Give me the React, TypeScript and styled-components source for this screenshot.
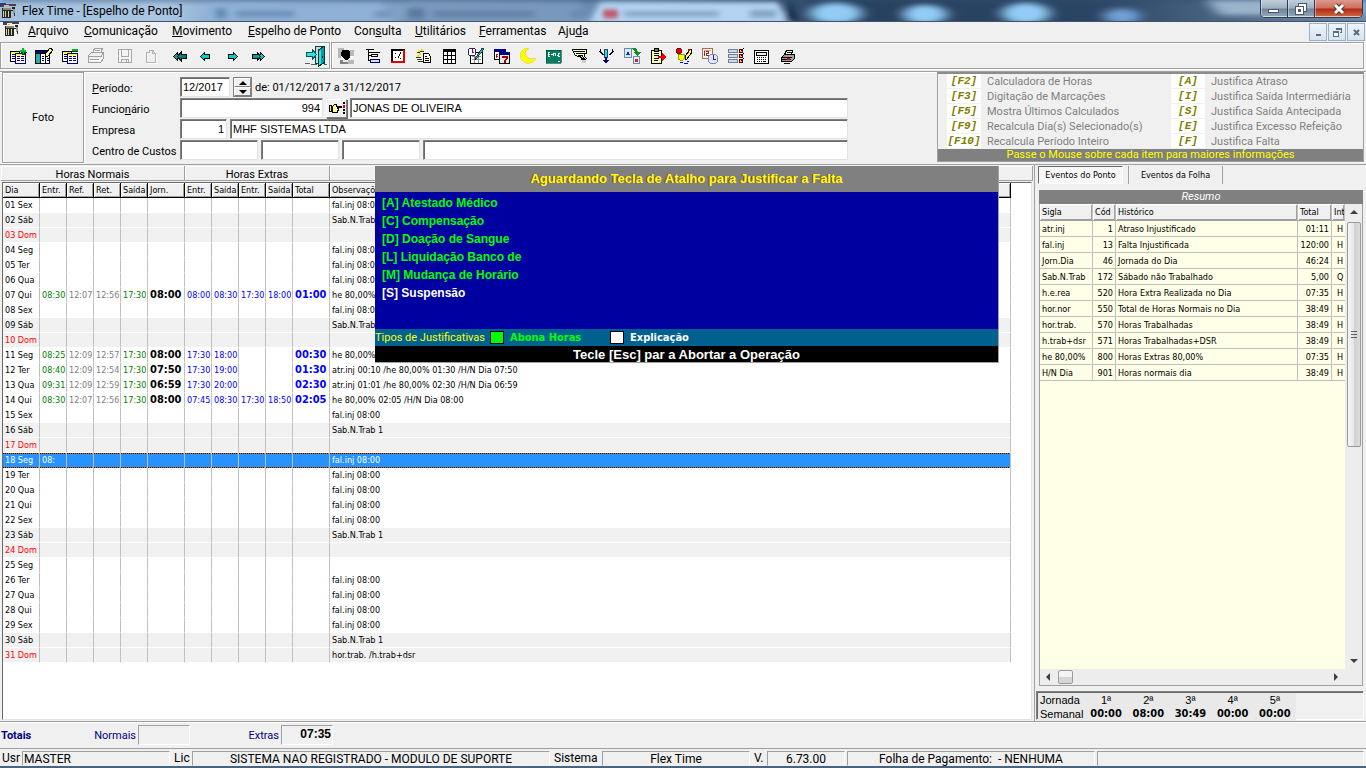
import React from 'react';
import styled, { createGlobalStyle, css } from 'styled-components';

const ui = 'Roboto, "Open Sans", sans-serif';
const small = '"DejaVu Sans Condensed", "DejaVu Sans", Roboto, sans-serif';
const arial = '"Liberation Sans", Arial, sans-serif';

const GlobalStyle = createGlobalStyle`
  * { box-sizing: border-box; }
  html, body { margin: 0; padding: 0; }
  body { background: #f0f0f0; font-family: ${ui}; font-size: 11px; color: #000; }
  button, input { font: inherit; color: inherit; margin: 0; padding: 0; border-radius: 0; }
  u { text-underline-offset: 1px; }
`;

const groove = css`
  border: 1px solid #a0a0a0;
  box-shadow: inset 1px 1px 0 #fff, 1px 1px 0 #fff;
`;
const sunken = css`
  border: 1px solid;
  border-color: #a0a0a0 #fff #fff #a0a0a0;
`;

const Window = styled.div`
  display: flex;
  flex-direction: column;
  min-height: 100vh;
  background: #f0f0f0;
`;

/* ---------- title bar ---------- */
const TitleBar = styled.header`
  position: relative;
  display: flex;
  height: 22px;
  overflow: hidden;
  border-bottom: 1px solid #43536b;
  box-shadow: inset 0 -1px 0 #c9d9ea;
  background: #4c6a8c;
`;
const Glass = styled.svg`
  position: absolute;
  top: 0;
  left: 0;
  width: 100%;
  height: 100%;
`;
const TitleText = styled.h1`
  position: relative;
  flex: 1;
  display: flex;
  align-items: center;
  gap: 5px;
  margin: 0;
  padding-left: 0;
  font-size: 12px;
  font-weight: 400;
  line-height: 20px;
`;
const Caption = styled.div`
  position: relative;
  display: flex;
  height: 18px;
  margin-right: 3px;
  border: 1px solid #2d3b4e;
  border-top: 0;
  border-radius: 0 0 5px 5px;
  overflow: hidden;
`;
const CaptionButton = styled.button<{ $close?: boolean }>`
  display: flex;
  align-items: center;
  justify-content: center;
  width: ${p => (p.$close ? 47 : 27)}px;
  border: 0;
  border-right: ${p => (p.$close ? '0' : '1px solid #2d3b4e')};
  box-shadow: inset 0 -1px 0 rgba(255, 255, 255, 0.6), inset 1px 0 0 rgba(255, 255, 255, 0.4);
  background: ${p =>
    p.$close
      ? 'linear-gradient(#dc9a8d 0, #cf6d5b 8px, #b32a12 9px, #d06a45 17px)'
      : 'linear-gradient(#c3cfdb 0, #9fb0c2 8px, #70859b 9px, #94a8bd 17px)'};
`;

/* ---------- menu ---------- */
const MenuBar = styled.nav`
  display: flex;
  align-items: center;
  height: 20px;
  padding: 0 1px 0 3px;
  font-size: 12px;
`;
const MenuItem = styled.button<{ $w: number }>`
  width: ${p => p.$w}px;
  border: 0;
  background: none;
  text-align: left;
  white-space: nowrap;
  line-height: 18px;
  padding-bottom: 2px;
`;
const ChildButtons = styled.div`
  display: flex;
  gap: 1px;
  margin-left: auto;
`;
const ChildButton = styled.button`
  display: flex;
  align-items: center;
  justify-content: center;
  width: 18px;
  height: 18px;
  border: 1px solid #9fb0c0;
  background: linear-gradient(#eef5fc, #d4e3f2);
`;

/* ---------- toolbar ---------- */
const ToolRow = styled.div`
  display: flex;
  gap: 1px;
  height: 29px;
  padding-right: 2px;
`;
const ToolGroup = styled.div<{ $grow?: boolean }>`
  ${groove}
  display: flex;
  align-items: center;
  height: 27px;
  padding: ${p => (p.$grow ? '0 1px' : '0 0 0 4px')};
  width: ${p => (p.$grow ? 'auto' : '330px')};
  flex: ${p => (p.$grow ? '1' : 'none')};
`;
const ToolButton = styled.button<{ $gap?: number; $end?: boolean }>`
  display: flex;
  align-items: center;
  justify-content: center;
  width: 26px;
  height: 24px;
  border: 0;
  background: none;
  margin-left: ${p => (p.$end ? 'auto' : `${p.$gap || 0}px`)};
`;

/* ---------- form ---------- */
const FormArea = styled.form`
  display: flex;
  height: 94px;
  padding: 0 2px;
  border-top: 1px solid #a0a0a0;
  border-bottom: 1px solid #a0a0a0;
  box-shadow: inset 0 1px 0 #fff;
`;
const Photo = styled.div`
  ${groove}
  width: 82px;
  height: 91px;
  display: flex;
  align-items: center;
  justify-content: center;
`;
const Fields = styled.div`
  flex: 1;
  display: flex;
  flex-direction: column;
  gap: 1px;
  padding: 5px 89px 0 8px;
`;
const FieldRow = styled.div`
  display: flex;
  align-items: center;
  gap: 3px;
  height: 20px;
`;
const FieldLabel = styled.label`
  width: 85px;
  padding-top: 2px;
  white-space: nowrap;
`;
const Field = styled.input<{ $w?: number; $right?: boolean }>`
  height: 20px;
  width: ${p => (p.$w ? `${p.$w}px` : 'auto')};
  flex: ${p => (p.$w ? 'none' : '1')};
  min-width: 0;
  padding: 0 2px;
  font-family: ${arial};
  text-align: ${p => (p.$right ? 'right' : 'left')};
  background: #fff;
  border: 1px solid;
  border-color: #808080 #e3e3e3 #e3e3e3 #808080;
  box-shadow: inset 1px 1px 0 #696969;
  outline: none;
`;
const Spinner = styled.div`
  display: flex;
  flex-direction: column;
  width: 19px;
  height: 20px;
  border: 1px solid #808080;
`;
const raised = css`
  background: #f0f0f0;
  border: 1px solid;
  border-color: #fff #808080 #808080 #fff;
`;
const SpinButton = styled.button`
  ${raised}
  flex: 1;
  display: flex;
  align-items: center;
  justify-content: center;
`;
const PickButton = styled.button`
  ${raised}
  box-shadow: 1px 1px 0 #696969;
  display: flex;
  align-items: center;
  justify-content: center;
  width: 21px;
  height: 19px;
`;
const Legend = styled.aside`
  width: 427px;
  height: 90px;
  border: 1px solid #a0a0a0;
  border-top: 2px solid #8c8c8c;
  display: flex;
  flex-direction: column;
  color: #808080;
`;
const LegendGrid = styled.dl`
  flex: 1;
  margin: 0;
  display: grid;
  grid-template-columns: 34px 178px 34px 1fr;
  grid-auto-rows: 15px;
  column-gap: 6px;
  padding-left: 9px;
  line-height: 15px;
  white-space: nowrap;
`;
const Key = styled.dt`
  height: 14px;
  background: #fff;
  color: #808000;
  font: italic 700 11px/14px "Liberation Mono", monospace;
  text-align: center;
`;
const KeyText = styled.dd`
  margin: 0;
`;
const LegendNote = styled.div`
  height: 13px;
  background: #808080;
  color: #ff0;
  line-height: 12px;
  text-align: center;
`;

/* ---------- main ---------- */
const Main = styled.main`
  flex: 1;
  display: flex;
  border-bottom: 1px solid #a0a0a0;
`;
const Sheet = styled.section`
  position: relative;
  flex: 1;
  min-width: 0;
  display: flex;
  flex-direction: column;
  padding: 1px;
  border-right: 1px solid #a0a0a0;
`;
const GroupBar = styled.div`
  display: flex;
  height: 15px;
  line-height: 17px;
  text-align: center;
  border-bottom: 1px solid #a0a0a0;
`;
const Group = styled.div<{ $w?: number }>`
  width: ${p => (p.$w ? `${p.$w}px` : 'auto')};
  flex: ${p => (p.$w ? 'none' : '1')};
  border-right: 1px solid #a0a0a0;
  box-shadow: inset 1px 1px 0 #fff;
`;
const SheetBody = styled.div`
  flex: 1;
  margin: 1px 1px 0 1px;
  background: #fff;
  border-left: 1px solid #696969;
  border-top: 1px solid #696969;
  border-right: 1px solid #e3e3e3;
  border-bottom: 1px solid #e3e3e3;
`;
const Table = styled.table`
  table-layout: fixed;
  width: calc(100% - 20px);
  border-collapse: separate;
  border-spacing: 0;
  font: 9px/14px ${small};
  white-space: nowrap;
`;
const Th = styled.th`
  height: 15px;
  padding: 0 0 0 2px;
  overflow: hidden;
  font-weight: 400;
  text-align: left;
  background: #f0f0f0;
  border-right: 1px solid #000;
  border-bottom: 1px solid #000;
  box-shadow: inset 1px 1px 0 #fff, inset -1px -1px 0 #a0a0a0;
`;
const rowColor = { work: '#000', sat: '#000', sun: '#f00', sel: '#fff' };
const Td = styled.td<{ $c?: string; $bold?: boolean }>`
  height: 15px;
  padding: 0 0 0 2px;
  overflow: hidden;
  border-right: 1px solid #c0c0c0;
  color: ${p => p.$c || 'inherit'};
  ${p => p.$bold && css`font-size: 11px; font-weight: 700;`}
`;
type Kind = 'work' | 'sat' | 'sun' | 'sel';
const Tr = styled.tr<{ $kind: Kind }>`
  color: ${p => (p.$kind === 'sel' ? '#fff' : '#000')};
  ${Td} {
    background: ${p => (p.$kind === 'sel' ? '#2893ff' : p.$kind === 'work' ? '#fff' : '#f1f1f1')};
    border-bottom: 1px solid #fff;
    ${p => p.$kind === 'sel' && css`
      border-bottom: 0;
      background:
        repeating-linear-gradient(90deg, #000 0 1px, #d76c00 1px 2px) top / 100% 1px no-repeat,
        repeating-linear-gradient(90deg, #000 0 1px, #d76c00 1px 2px) bottom / 100% 1px no-repeat,
        #2893ff;
      line-height: 13px;
    `}
  }
  ${Td}:first-child { color: ${p => rowColor[p.$kind]}; }
`;

/* ---------- shortcut dialog ---------- */
const Dialog = styled.div`
  position: absolute;
  top: 1px;
  left: 375px;
  width: 624px;
  border: 1px solid #a0a0a0;
  border-width: 0 1px 1px 0;
  font-family: ${arial};
  font-size: 12px;
  font-weight: 700;
`;
const DialogTitle = styled.h2`
  margin: 0;
  height: 26px;
  line-height: 26px;
  font-size: 13px;
  text-align: center;
  color: #ff0;
  background: #808080;
  text-shadow: -1px 0 0 #804040;
`;
const Options = styled.ul`
  list-style: none;
  margin: 0;
  height: 137px;
  padding: 2px 7px;
  background: #0000a0;
  color: #0f0;
  line-height: 18px;
  li:last-child { color: #fff; }
`;
const Kinds = styled.div`
  display: flex;
  align-items: center;
  height: 17px;
  background: #006090;
  font: 11px/17px ${ui};
  color: #ff0;
`;
const KindsLabel = styled.span`
  width: 115px;
  white-space: nowrap;
`;
const Swatch = styled.span<{ $c: string }>`
  width: 14px;
  height: 13px;
  border: 1px solid #000;
  background: ${p => p.$c};
`;
const KindName = styled.strong<{ $c: string }>`
  width: 106px;
  padding-left: 6px;
  font: 700 11px/17px ${small};
  color: ${p => p.$c};
`;
const Hint = styled.div`
  height: 16px;
  line-height: 17px;
  font-size: 13px;
  background: #000;
  color: #fff;
  text-align: center;
`;

/* ---------- right column ---------- */
const Side = styled.aside`
  width: 331px;
  display: flex;
  flex-direction: column;
  padding-top: 1px;
`;
const Tabs = styled.div`
  display: flex;
  height: 24px;
  padding-left: 3px;
  font: 9px/16px ${small};
`;
const Tab = styled.button<{ $on?: boolean }>`
  height: 18px;
  width: ${p => (p.$on ? 85 : 95)}px;
  margin-right: 5px;
  white-space: nowrap;
  border: 1px solid #a0a0a0;
  border-width: ${p => (p.$on ? '1px' : '0 1px')};
  border-color: ${p => (p.$on ? '#696969 #fff #fff #696969' : '#a0a0a0')};
  background: ${p => (p.$on ? '#f8f8f8' : 'none')};
`;
const Summary = styled.div`
  flex: 1;
  display: flex;
  flex-direction: column;
  margin: 0 3px 5px 4px;
  border: 1px solid #a0a0a0;
`;
const SummaryTitle = styled.h2`
  margin: -1px -1px 0;
  height: 14px;
  font: italic 400 11px/14px ${ui};
  color: #fff;
  text-align: center;
  background: #808080;
`;
const SummaryBody = styled.div`
  flex: 1;
  display: flex;
`;
const SummaryGrid = styled.div`
  flex: 1;
  min-width: 0;
  overflow: hidden;
  background: #ffffe8;
`;
const SumTable = styled(Table)`
  width: 100%;
`;
const SumTh = styled(Th)`
  height: 17px;
  border-color: #c0c0c0;
  border-bottom-color: #a0a0a0;
`;
const SumTd = styled.td<{ $right?: boolean }>`
  height: 16px;
  padding: 0 2px;
  overflow: hidden;
  text-align: ${p => (p.$right ? 'right' : 'left')};
  border-right: 1px solid #c0c0c0;
  border-bottom: 1px solid #c0c0c0;
  &:last-child { padding: 0 0 0 5px; border-right: 0; }
`;
const VScroll = styled.div`
  width: 17px;
  display: flex;
  flex-direction: column;
  align-items: center;
  background: #ededed;
`;
const ArrowButton = styled.button`
  width: 16px;
  height: 16px;
  display: flex;
  align-items: center;
  justify-content: center;
  border: 0;
  background: none;
`;
const VThumb = styled.div`
  width: 14px;
  height: 225px;
  margin: 2px 0 auto;
  display: flex;
  align-items: center;
  justify-content: center;
  border: 1px solid #9a9a9a;
  border-radius: 2px;
  background: linear-gradient(90deg, #f6f6f6, #e6e6e6 50%, #d2d2d2 51%, #dcdcdc);
`;
const HScroll = styled.div`
  display: flex;
  align-items: center;
  height: 16px;
  padding-right: 18px;
  background: #ededed;
`;
const HThumb = styled.div`
  width: 15px;
  height: 14px;
  margin: 0 auto 0 2px;
  border: 1px solid #9a9a9a;
  border-radius: 2px;
  background: linear-gradient(#f4f4f4 50%, #d6d6d6 51%);
`;
const Weekly = styled.div`
  height: 29px;
  margin: 0 2px 1px 1px;
  border: 1px solid;
  border-color: #808080 #fff #fff #808080;
  box-shadow: inset 1px 1px 0 #696969;
`;
const WeeklyTable = styled.table`
  width: 258px;
  table-layout: fixed;
  border-collapse: collapse;
  background: #e9e9e9;
  margin: 1px 0 0 1px;
  th { padding: 0; font: 11px/14px ${arial}; text-align: center; height: 13px; }
  td { padding: 0; font: 700 11px/14px ${small}; text-align: center; height: 13px; }
  th:first-child { text-align: left; padding-left: 2px; }
`;

/* ---------- footer ---------- */
const Totals = styled.div`
  display: flex;
  align-items: center;
  height: 27px;
  padding-left: 1px;
  color: #000080;
  border-bottom: 1px solid #a0a0a0;
  box-shadow: inset 0 1px 0 #fff;
  label { width: 91px; text-align: right; padding-right: 2px; }
`;
const TotalsTitle = styled.strong`
  width: 46px;
`;
const TotalBox = styled.input`
  ${sunken}
  width: 52px;
  height: 20px;
  padding: 0 1px 3px;
  background: #f0f0f0;
  color: #000;
  font: 700 12px ${arial};
  text-align: right;
`;
const StatusBar = styled.footer`
  display: flex;
  height: 19px;
  padding-top: 2px;
  font-size: 12px;
  line-height: 15px;
  white-space: nowrap;
  border-bottom: 2px solid #4a6480;
`;
const StatusLabel = styled.span<{ $w: number }>`
  width: ${p => p.$w}px;
  padding-left: 2px;
`;
const StatusBox = styled.span<{ $w?: number; $left?: boolean }>`
  border: 1px solid;
  border-color: #a0a0a0 #fff #f0f0f0 #a0a0a0;
  width: ${p => (p.$w ? `${p.$w}px` : 'auto')};
  flex: ${p => (p.$w ? 'none' : '1')};
  margin-right: 2px;
  padding: 0 1px;
  text-align: ${p => (p.$left ? 'left' : 'center')};
`;

/* ---------- icons: small pixel drawings ---------- */
const Ico = ({ w = 18, h = 18, children }: { w?: number; h?: number; children: React.ReactNode }) => (
  <svg width={w} height={h} viewBox={`0 0 ${w} ${h}`} shapeRendering="crispEdges" aria-hidden="true">
    {children}
  </svg>
);
const L = ({ d, c = '#000', w = 1 }: { d: string; c?: string; w?: number }) => (
  <path d={d} stroke={c} strokeWidth={w} fill="none" />
);

const AppIcon = () => (
  <Ico w={17} h={17}>
    <path d="M0 1h6v2H0z" fill="#223a9a" /><path d="M6 2h4v1H6z" fill="#d02020" />
    <path d="M0 3h4v2H0zM9 2h7v2H9z" fill="#444" />
    <path d="M2 6h9v10H2z" fill="#26261a" /><path d="M3 9h1v6H3zM5 9h1v6H5zM8 9h1v6H8z" fill="#d8d4b8" />
    <path d="M3 6h8v2H3z" fill="#8a8a70" /><path d="M12 5h3v2h-3zM11 8h4v1h-4z" fill="#222" /><path d="M13 7h2v5h-2z" fill="#999" />
    <path d="M5 4h2v1H5z" fill="#e0c030" /><path d="M14 11h1v3h-1z" fill="#333" />
  </Ico>
);
const pages = (
  <>
    <path d="M1.500 4.500h9v10h-9z" fill="#fff" stroke="#000" />
    <path d="M2 5h8v1H2z" fill="#ff0" />
    <L d="M3 7.500h3M3 9.500h3M3 11.500h3" c="#000080" />
    <path d="M6.500 6.500h10v10h-10z" fill="#fff" stroke="#000080" />
    <path d="M7 7h9v1H7z" fill="#ff0" />
    <L d="M8 9.500h3M12 9.500h3M8 11.500h3M12 11.500h3M8 13.500h3M12 13.500h3" c="#000080" />
  </>
);
const icons: Record<string, React.ReactNode> = {
  Novo: <Ico>{pages}<path d="M11 3h2V1h2v2h2v2h-2v2h-2V5h-2z" fill="#00c020" /><L d="M12 5.500h1v2h2v-2h3" c="#004000" /></Ico>,
  Alterar: (
    <Ico>
      <path d="M.5 3.500h14v13H.5z" fill="#fff" stroke="#000" /><path d="M1 4h10v2H1z" fill="#000080" />
      <path d="M1 7h4v9H1z" fill="#20b0b0" /><L d="M5.500 6v10M10.500 6v10M1 6.500h13" />
      <L d="M7 9.500h2M7 11.500h2M7 13.500h2M12 11.500h2M12 13.500h2" c="#000080" />
      <path d="M15 1l3 2-5 6h-3V7z" fill="#ff8" stroke="#000" />
    </Ico>
  ),
  Excluir: <Ico>{pages}<path d="M11 2h6v2h-6z" fill="#00b020" /><L d="M11 4.500h6" c="#004000" /></Ico>,
  Imprimir: (
    <Ico>
      <path d="M5.500 6l2-4.500h8l-2 4.500" fill="#f8f8f8" stroke="#a0a0a0" />
      <path d="M1.500 8.500l3-3h12v6l-3 4h-12z" fill="#f0f0f0" stroke="#a0a0a0" />
      <L d="M2 9.500h12M14 9.500l2-3M3 12.500h9M8 3.500h5" c="#a0a0a0" /><L d="M2 13.500h12" c="#fff" />
    </Ico>
  ),
  Salvar: (
    <Ico>
      <path d="M2.500 2.500h13v13h-13z" fill="#f4f4f4" stroke="#a8a8a8" />
      <L d="M5.500 3v6h7V3M5.500 16v-4h7v4M10.500 12v3" c="#a8a8a8" />
    </Ico>
  ),
  Cancelar: (
    <Ico>
      <path d="M4.500 5.500h3v-3M4.500 5v10.500h9V6.500h-3v-3h-3M10.500 3l3 3.500" fill="none" stroke="#b4b4b4" />
      <L d="M5 16.500h9.500V7" c="#fff" />
    </Ico>
  ),
  Primeiro: (
    <Ico>
      <path d="M6 9.500l4-4v2h5v4h-5v2z" fill="#008080" stroke="#000" />
      <path d="M2.500 9.500l4-4v2h2l-2 2 2 2h-2v2z" fill="#00a0a0" stroke="#000" />
    </Ico>
  ),
  Anterior: <Ico><path d="M3.500 9.500l4-4v2h5v4h-5v2z" fill="#00d0d0" stroke="#000" /></Ico>,
  Próximo: <Ico><path d="M14.500 9.500l-4-4v2h-5v4h5v2z" fill="#00d0d0" stroke="#000" /></Ico>,
  Último: (
    <Ico>
      <path d="M12 9.500l-4-4v2H3v4h5v2z" fill="#00a0a0" stroke="#000" />
      <path d="M15.500 9.500l-4-4v2h-2l2 2-2 2h2v2z" fill="#00c8c8" stroke="#000" />
    </Ico>
  ),
  Sair: (
    <Ico w={22} h={22}>
      <path d="M10.500 1.500h9v17h-9z" fill="#cfd8d8" stroke="#004848" />
      <path d="M13.500 5l5.500-3.500v16l-5.500 4z" fill="#00a0a8" stroke="#003838" />
      <path d="M14 6l2-1v14l-2 1z" fill="#48d8d8" /><path d="M1.500 7.500h6v-3l4 5-4 5v-3h-6z" fill="#30e0e0" stroke="#005858" />
      <L d="M0 18.500h5M6 19.500h6M19 19.500h3" c="#606060" /><path d="M17 11h1v2h-1z" fill="#000" />
    </Ico>
  ),
  Funcionários: (
    <Ico>
      <path d="M1 1h6v4H1zM1 5h3v6H1zM13 3h4v6h-4zM11 13h6v4h-6z" fill="#b8b8b8" />
      <path d="M5 3h6l2 2v5l-2 3H8l-1-2-2-1-1-3z" fill="#000" /><path d="M3 13h3v2h5v2H3z" fill="#808080" />
      <path d="M12 2h1v1h-1zM14 9h2v2h-2z" fill="#fff" />
    </Ico>
  ),
  Organograma: (
    <Ico>
      <path d="M3 2h8v1H3zM5 5h12v1H5z" /><L d="M5.500 3v11M5 8.500h3M5 13.500h3" />
      <path d="M8.500 7.500h6v2h-6z" fill="#ff8" stroke="#000" />
      <path d="M7.500 12.500h9v3h-9z" fill="#dde" stroke="#000050" />
    </Ico>
  ),
  Quadro: (
    <Ico>
      <path d="M3 3h12v12H3z" fill="#fff" stroke="#000" strokeWidth="2" /><L d="M2 15h13V3" c="#e00000" w={2} />
      <L d="M6.500 6v1M6.500 10v1M11.500 5v2M10.500 7v2M9.500 9v2M11.500 11v1" />
    </Ico>
  ),
  Lançamentos: (
    <Ico>
      <path d="M3 3h2v2H3zM6 2h2v2H6zM4 6h2v2H4zM2 8h2v2H2z" fill="#f0e000" />
      <L d="M2 5.500h3M1 10.500h5M2 12.500h5M3 14.500h6M5 4.500h4" c="#333" />
      <path d="M8.500 6.500h5l2 3v6h-7z" fill="#fffde8" stroke="#000" /><L d="M10 9.500h2M10 11.500h4M10 13.500h4" />
    </Ico>
  ),
  Tabela: (
    <Ico>
      <path d="M2.500 2.500h12v14h-12z" fill="#fff" stroke="#000" />
      <L d="M2 4.500h13M2 8.500h13M2 12.500h13M6.500 4v13M10.500 4v13" /><L d="M3 3.500h11" c="#000" />
    </Ico>
  ),
  Escala: (
    <Ico>
      <path d="M3.500 5.500h12v11h-12z" fill="#fff" stroke="#000" />
      <L d="M5 9.500h9M5 12.500h9M7.500 8v8M11.500 8v8" c="#909090" />
      <circle cx="5" cy="5" r="4" fill="#fff" stroke="#302050" /><L d="M5.500 2v4M5 5.500h2" c="#800080" />
      <path d="M17 2l-7 9-2 2 1-3 6-9z" fill="#20c0c0" stroke="#000" strokeWidth=".7" />
    </Ico>
  ),
  Calendário: (
    <Ico>
      <path d="M1.500 2.500h11v10h-11z" fill="#fff" stroke="#000" /><path d="M1 2h12v3H1z" fill="#000080" />
      <path d="M3 7h2v1H3zM3 9h2v1H3zM3 7h1v4H3z" fill="#c00" /><path d="M6.500 5.500h10v11h-10z" fill="#e8e8e8" stroke="#000" />
      <path d="M6 5h11v3H6z" fill="#000080" /><path d="M9 9h6v3h-1v1h-1v3h-2v-3h1v-1h1v-1H9z" fill="#a00000" />
    </Ico>
  ),
  Noturno: <Ico><path d="M7 1C2 2 0 8 2 12c3 5 10 6 14 1v-2c-3 2-8 1-9-3C6 5 7 3 10 2z" fill="#ff0" stroke="#e0c800" strokeWidth=".5" /></Ico>,
  Eventos: (
    <Ico>
      <path d="M1 3h15v13H1z" fill="#008060" stroke="#004030" strokeWidth=".6" />
      <L d="M5 5.500H3v4h2M3 7.500h2M6 7.500h2M8.500 9V6h2v3M12 8.500h1v-2h2M13 9.500h2" c="#fff" /><path d="M13 14h2v1h-2z" fill="#fff" />
    </Ico>
  ),
  Assinatura: (
    <Ico>
      <path d="M1.500 2.500h14v4h-2v3l2 2-2 2-4-4h-3l-3-2z" fill="#ffffc0" stroke="#000" />
      <L d="M3 4.500h11M5 6.500h8M7 8.500h5M9 10l4 5M11 9l4 5" /><path d="M11 13h4v3h-4z" fill="#ccc" />
    </Ico>
  ),
  Divisão: (
    <Ico>
      <L d="M3.500 2v3l2 2h2M15.500 2v3l-2 2h-2M2 4.500h2M15 4.500h2" />
      <path d="M7.500 2.500h3v8h-3z" fill="#40d0e0" stroke="#205060" /><L d="M9 10v5" c="#000080" w={2} />
      <path d="M6 13h6l-3 4z" fill="#000080" />
    </Ico>
  ),
  Importar: (
    <Ico>
      <path d="M1.500 1.500h7v9h-7z" fill="#d8e8f8" stroke="#7088b0" /><path d="M3 8l2-4 2 4z" fill="#103080" />
      <path d="M9 1h4l2 4h3l-4 4-4-4h2z" fill="#109020" /><path d="M10.500 9.500h6v7h-6z" fill="#e0ecf8" stroke="#7088b0" />
      <path d="M12 12h3v3h-3z" fill="#e02020" />
    </Ico>
  ),
  Exportar: (
    <Ico>
      <path d="M2.500 3.500h10v13h-10z" fill="#ffffa0" stroke="#000" /><path d="M5.500 1.500h4v3h-4z" fill="#808000" stroke="#000" />
      <L d="M5 6.500h5M5 8.500h5M5 11.500h5M5 13.500h4" c="#000080" /><path d="M9 9h4V6l4 4-4 4v-3H9z" fill="#f00000" />
    </Ico>
  ),
  Cores: (
    <Ico>
      <circle cx="4" cy="4" r="3" fill="#e00000" stroke="#400" strokeWidth=".6" /><path d="M3 7h6v5l-3 2-3-2z" fill="#ff0" stroke="#550" strokeWidth=".6" />
      <path d="M16 2l1 3-5 7-2 1V9z" fill="#ff6" stroke="#000" /><path d="M13 2h2v2h-2z" fill="#e00000" /><L d="M5 15.500h3M9 16.500h4M12 14.500h2" c="#0000e0" />
    </Ico>
  ),
  Horários: (
    <Ico>
      <path d="M1.500 1.500h10v10h-10z" fill="#fff" stroke="#b06848" /><L d="M3.500 4v5M5 4.500h2.500v2H5.500v2H8" c="#a02020" /><L d="M3 3.500h7" c="#d8a080" />
      <circle cx="12" cy="12" r="5" fill="#e0e4ff" stroke="#8088b0" /><L d="M12.500 8v4.500H15" c="#303070" />
    </Ico>
  ),
  Parâmetros: (
    <Ico>
      <path d="M1.500 2.500h9v3h-9zM1.500 7.500h9v3h-9zM1.500 12.500h9v3h-9z" fill="#c8dcf0" stroke="#708090" />
      <path d="M12.500 2.500h3v3h-3zM12.500 7.500h3v3h-3zM12.500 12.500h3v3h-3z" fill="#ffb090" stroke="#600000" />
      <L d="M14 4l3-3M14 9l3-3M14 14l3-3" />
    </Ico>
  ),
  Calculadora: (
    <Ico>
      <path d="M1.500 3.500h14v13h-14z" fill="#fff" stroke="#000" /><path d="M3.500 5.500h10v3h-10z" fill="#eee" stroke="#000" />
      <path d="M4 10h1v1H4zM6 10h1v1H6zM8 10h1v1H8zM10 10h1v1h-1zM12 10h1v1h-1zM4 12h1v1H4zM6 12h1v1H6zM8 12h1v1H8zM10 12h1v1h-1zM12 12h1v1h-1zM4 14h1v1H4zM6 14h1v1H6zM8 14h1v1H8zM10 14h3v1h-3z" />
    </Ico>
  ),
  'Imprimir espelho': (
    <Ico>
      <path d="M5.500 7.500l2-4h6l-1 4" fill="#fff" stroke="#000" /><path d="M2.500 10.500l3-3h10v4l-3 3h-10z" fill="#a0a0a0" stroke="#000" />
      <L d="M3 10.500h10M3 12.500h9M8 5.500h4M5 16.500h6" /><path d="M8 11h3v2H8z" fill="#e00000" /><L d="M4 15.500h8" c="#fff" />
    </Ico>
  ),
};

const leftTools: [string, number?][] = [
  ['Novo'], ['Alterar'], ['Excluir'], ['Imprimir'], ['Salvar', 3], ['Cancelar'],
  ['Primeiro', 3], ['Anterior'], ['Próximo'], ['Último'],
];
const rightTools = [
  'Funcionários', 'Organograma', 'Quadro', 'Lançamentos', 'Tabela', 'Escala', 'Calendário', 'Noturno', 'Eventos',
  'Assinatura', 'Divisão', 'Importar', 'Exportar', 'Cores', 'Horários', 'Parâmetros', 'Calculadora', 'Imprimir espelho',
];

const menus: [string, string, string, number][] = [
  ['', 'A', 'rquivo', 56], ['', 'C', 'omunicação', 88], ['', 'M', 'ovimento', 76], ['', 'E', 'spelho de Ponto', 106],
  ['Con', 's', 'ulta', 61], ['', 'U', 'tilitários', 64], ['', 'F', 'erramentas', 79], ['Aju', 'd', 'a', 40],
];

const legend: [string, string][] = [
  ['F2', 'Calculadora de Horas'], ['A', 'Justifica Atraso'],
  ['F3', 'Digitação de Marcações'], ['I', 'Justifica Saída Intermediária'],
  ['F5', 'Mostra Últimos Calculados'], ['S', 'Justifica Saída Antecipada'],
  ['F9', 'Recalcula Dia(s) Selecionado(s)'], ['E', 'Justifica Excesso Refeição'],
  ['F10', 'Recalcula Período Inteiro'], ['F', 'Justifica Falta'],
];

const weekdays = ['Sex', 'Sáb', 'Dom', 'Seg', 'Ter', 'Qua', 'Qui'];
const punches: Record<number, string[]> = {
  7: ['08:30', '12:07', '12:56', '17:30', '08:00', '08:00', '08:30', '17:30', '18:00', '01:00'],
  11: ['08:25', '12:09', '12:57', '17:30', '08:00', '17:30', '18:00', '', '', '00:30'],
  12: ['08:40', '12:09', '12:54', '17:30', '07:50', '17:30', '19:00', '', '', '01:30'],
  13: ['09:31', '12:09', '12:59', '17:30', '06:59', '17:30', '20:00', '', '', '02:30'],
  14: ['08:30', '12:07', '12:56', '17:30', '08:00', '07:45', '08:30', '17:30', '18:50', '02:05'],
  18: ['08:', '', '', '', '', '', '', '', '', ''],
};
const notes: Record<number, string> = {
  3: '', 10: '', 17: '', 24: '', 25: '',
  7: 'he 80,00% 01:00 /H/N Dia 08:00',
  11: 'he 80,00% 00:30 /H/N Dia 08:00',
  12: 'atr.inj 00:10 /he 80,00% 01:30 /H/N Dia 07:50',
  13: 'atr.inj 01:01 /he 80,00% 02:30 /H/N Dia 06:59',
  14: 'he 80,00% 02:05 /H/N Dia 08:00',
  31: 'hor.trab. /h.trab+dsr',
};
const green = '#008000', gray = '#808080', blue = '#0000ff';
const colors = [green, gray, gray, green, '#000', blue, blue, blue, blue, blue];
const dayCols = [37, 27, 27, 27, 27, 37, 27, 27, 27, 27, 37];
const heads = ['Dia', 'Entr.', 'Ref.', 'Ret.', 'Saída', 'Jorn.', 'Entr.', 'Saída', 'Entr.', 'Saída', 'Total', 'Observações'];

const days = Array.from({ length: 31 }, (_, i) => {
  const n = i + 1;
  const wd = weekdays[i % 7];
  const kind: Kind = n === 18 ? 'sel' : wd === 'Sáb' ? 'sat' : wd === 'Dom' ? 'sun' : 'work';
  return {
    n, kind,
    label: `${String(n).padStart(2, '0')} ${wd}`,
    cells: punches[n] || Array(10).fill(''),
    note: notes[n] ?? (wd === 'Sáb' ? 'Sab.N.Trab 1' : 'fal.inj 08:00'),
  };
});

const summary = [
  ['atr.inj', '1', 'Atraso Injustificado', '01:11', 'H'], ['fal.inj', '13', 'Falta Injustificada', '120:00', 'H'],
  ['Jorn.Dia', '46', 'Jornada do Dia', '46:24', 'H'], ['Sab.N.Trab', '172', 'Sábado não Trabalhado', '5,00', 'Q'],
  ['h.e.rea', '520', 'Hora Extra Realizada no Dia', '07:35', 'H'], ['hor.nor', '550', 'Total de Horas Normais no Dia', '38:49', 'H'],
  ['hor.trab.', '570', 'Horas Trabalhadas', '38:49', 'H'], ['h.trab+dsr', '571', 'Horas Trabalhadas+DSR', '38:49', 'H'],
  ['he 80,00%', '800', 'Horas Extras 80,00%', '07:35', 'H'], ['H/N Dia', '901', 'Horas normais dia', '38:49', 'H'],
];

const arrows = {
  up: 'M0 4L4 0l4 4z', down: 'M0 0h8L4 4z', left: 'M4 0v8L0 4z', right: 'M0 0l4 4-4 4z',
};
const Arrow = ({ dir, c = '#404040' }: { dir: keyof typeof arrows; c?: string }) => {
  const flat = dir === 'up' || dir === 'down';
  return (
    <svg width={flat ? 8 : 4} height={flat ? 4 : 8} aria-hidden="true"><path d={arrows[dir]} fill={c} /></svg>
  );
};

const GlassBackdrop = () => (
  <Glass viewBox="0 0 1366 22" preserveAspectRatio="none" aria-hidden="true">
    <defs>
      <filter id="soft" x="-20%" y="-60%" width="140%" height="220%"><feGaussianBlur stdDeviation="3" /></filter>
      <filter id="softer" x="-40%" y="-80%" width="180%" height="260%"><feGaussianBlur stdDeviation="7 3" /></filter>
      <linearGradient id="sky" x1="0" x2="1" y1="0" y2="0">
        <stop offset="0" stopColor="#a3c1de" /><stop offset=".12" stopColor="#a9c5e2" /><stop offset=".16" stopColor="#8fb0d2" />
        <stop offset=".42" stopColor="#6f91b6" /><stop offset=".56" stopColor="#3b5878" /><stop offset=".62" stopColor="#27405f" />
        <stop offset=".8" stopColor="#2c4464" /><stop offset="1" stopColor="#6d88a6" />
      </linearGradient>
    </defs>
    <path d="M0 0h1366v22H0z" fill="url(#sky)" />
    <path d="M0-4h1366v6H0z" fill="#33506f" opacity=".5" filter="url(#soft)" />
    <g filter="url(#soft)">
      <path d="M198 26l12-22h172l12 22z" fill="#8fb1d6" /><path d="M400 26l10-22h168l12 22z" fill="#7898bc" />
      <path d="M588 26l12-24h178l12 24z" fill="#b4d3f2" /><path d="M790 0l10 22h-16z" fill="#1b3350" />
    </g>
    <g opacity=".6">
      <g filter="url(#soft)">
        <path d="M216 9h10v10h-10zM236 12h58v5h-58z" fill="#456a9c" /><path d="M408 9h16v11h-16zM434 12h100v5H434z" fill="#4a6888" />
        <path d="M624 12h95v5h-95zM750 11h26v7h-26zM374 12h16v6h-16zM572 12h12v6h-12z" fill="#5a7ba0" />
      </g>
    </g>
    <rect x="603" y="10" width="15" height="9" rx="3" fill="#c23b4a" opacity=".8" style={{ filter: 'blur(2px)' }} />
    <g filter="url(#softer)" fill="#92ccf6">
      <ellipse cx="836" cy="14" rx="26" ry="11" /><ellipse cx="925" cy="15" rx="22" ry="10" />
      <ellipse cx="1026" cy="14" rx="24" ry="11" /><ellipse cx="1122" cy="17" rx="18" ry="8" fill="#6fa0d6" />
      <path d="M1206 0h160v16h-146z" fill="#9ab4cc" />
    </g>
  </Glass>
);

export default function App() {
  return (
    <Window>
      <GlobalStyle />
      <TitleBar>
        <GlassBackdrop />
        <TitleText><AppIcon />Flex Time - [Espelho de Ponto]</TitleText>
        <Caption>
          <CaptionButton aria-label="Minimizar">
            <Ico w={14} h={10}><path d="M1.500 5.500h10v3h-10z" fill="#fff" stroke="#4a5568" /></Ico>
          </CaptionButton>
          <CaptionButton aria-label="Restaurar">
            <Ico w={14} h={14}>
              <path d="M4.500 1.500h8v8h-8z" fill="#fff" stroke="#4a5568" /><path d="M1.500 4.500h8v8h-8z" fill="#fff" stroke="#4a5568" />
              <path d="M4.500 7.500h2v2h-2z" fill="#778" stroke="#4a5568" />
            </Ico>
          </CaptionButton>
          <CaptionButton $close aria-label="Fechar">
            <svg width="14" height="12" viewBox="0 0 14 12">
              <path d="M3 2l8 8M11 2l-8 8" stroke="#5a3030" strokeWidth="5" /><path d="M3 2l8 8M11 2l-8 8" stroke="#fff" strokeWidth="3" />
            </svg>
          </CaptionButton>
        </Caption>
      </TitleBar>

      <MenuBar>
        <MenuItem $w={25} aria-label="Janela"><AppIcon /></MenuItem>
        {menus.map(([a, u, b, w]) => (
          <MenuItem key={u} $w={w}>{a}<u>{u}</u>{b}</MenuItem>
        ))}
        <ChildButtons>
          <ChildButton aria-label="Minimizar janela"><Ico w={11} h={11}><path d="M3 7h5v2H3z" fill="#5a6b80" /></Ico></ChildButton>
          <ChildButton aria-label="Restaurar janela">
            <Ico w={11} h={11}>
              <L d="M4.500 3V1.500h5v4H8" c="#5a6b80" /><L d="M4 2h6" c="#5a6b80" w={2} />
              <path d="M1.500 5.500h5v4h-5z" fill="#fff" stroke="#5a6b80" /><L d="M1 5h6" c="#5a6b80" w={2} />
            </Ico>
          </ChildButton>
          <ChildButton aria-label="Fechar janela">
            <svg width="9" height="9" aria-hidden="true"><path d="M2 2l5 5M7 2L2 7" stroke="#5a6b80" strokeWidth="2" /></svg>
          </ChildButton>
        </ChildButtons>
      </MenuBar>

      <ToolRow role="toolbar">
        <ToolGroup>
          {leftTools.map(([name, gap]) => (
            <ToolButton key={name} $gap={gap} aria-label={name}>{icons[name]}</ToolButton>
          ))}
          <ToolButton $end aria-label="Sair">{icons.Sair}</ToolButton>
        </ToolGroup>
        <ToolGroup $grow>
          {rightTools.map(name => (
            <ToolButton key={name} aria-label={name}>{icons[name]}</ToolButton>
          ))}
        </ToolGroup>
      </ToolRow>

      <FormArea onSubmit={e => e.preventDefault()}>
        <Photo>Foto</Photo>
        <Fields>
          <FieldRow>
            <FieldLabel htmlFor="periodo"><u>P</u>eríodo:</FieldLabel>
            <Field id="periodo" $w={50} defaultValue="12/2017" />
            <Spinner>
              <SpinButton type="button" aria-label="Próximo mês"><Arrow dir="up" c="#000" /></SpinButton>
              <SpinButton type="button" aria-label="Mês anterior"><Arrow dir="down" c="#000" /></SpinButton>
            </Spinner>
            <span>de: 01/12/2017 a 31/12/2017</span>
          </FieldRow>
          <FieldRow>
            <FieldLabel htmlFor="func">Funcio<u>n</u>ário</FieldLabel>
            <Field id="func" $w={143} $right defaultValue="994" />
            <PickButton type="button" aria-label="Procurar funcionário">
              <Ico w={18} h={14}>
                <path d="M1.500 4.500h2v6h-2z" fill="#ff0" stroke="#000" />
                <path d="M4.500 5.500l2-2h2v2h5v1h-4v1h1v2h-1v2h-5z" fill="#ffff90" stroke="#000" />
                <path d="M15 1h2v2h-2zM15 8h2v2h-2zM15 11h2v2h-2z" /><path d="M15 4h2v3h-2z" fill="#e00000" />
              </Ico>
            </PickButton>
            <Field aria-label="Nome do funcionário" defaultValue="JONAS DE OLIVEIRA" />
          </FieldRow>
          <FieldRow>
            <FieldLabel htmlFor="empresa">Empresa</FieldLabel>
            <Field id="empresa" $w={47} $right defaultValue="1" />
            <Field aria-label="Nome da empresa" defaultValue="MHF SISTEMAS LTDA" />
          </FieldRow>
          <FieldRow>
            <FieldLabel htmlFor="centro">Centro de Custos</FieldLabel>
            <Field id="centro" $w={78} />
            <Field aria-label="Centro de custos, nível 2" $w={78} />
            <Field aria-label="Centro de custos, nível 3" $w={78} />
            <Field aria-label="Descrição do centro de custos" />
          </FieldRow>
        </Fields>
        <Legend>
          <LegendGrid>
            {legend.map(([k, t]) => (
              <React.Fragment key={k}><Key>[{k}]</Key><KeyText>{t}</KeyText></React.Fragment>
            ))}
          </LegendGrid>
          <LegendNote>Passe o Mouse sobre cada item para maiores informações</LegendNote>
        </Legend>
      </FormArea>

      <Main>
        <Sheet>
          <GroupBar>
            <Group $w={184}>Horas Normais</Group>
            <Group $w={145}>Horas Extras</Group>
            <Group />
          </GroupBar>
          <SheetBody>
            <Table>
              <colgroup>{dayCols.map((w, i) => <col key={i} width={w} />)}<col /></colgroup>
              <thead><tr>{heads.map((h, i) => <Th key={i}>{h}</Th>)}</tr></thead>
              <tbody>
                {days.map(d => (
                  <Tr key={d.n} $kind={d.kind}>
                    <Td>{d.label}</Td>
                    {d.cells.map((v: string, i: number) => (
                      <Td key={i} $bold={!!v && (i === 4 || i === 9)} $c={d.kind === 'sel' ? '#fff' : colors[i]}>{v}</Td>
                    ))}
                    <Td>{d.note}</Td>
                  </Tr>
                ))}
              </tbody>
            </Table>
          </SheetBody>
          <Dialog role="dialog" aria-labelledby="dlg-title">
            <DialogTitle id="dlg-title">Aguardando Tecla de Atalho para Justificar a Falta</DialogTitle>
            <Options>
              <li>[A] Atestado Médico</li>
              <li>[C] Compensação</li>
              <li>[D] Doação de Sangue</li>
              <li>[L] Liquidação Banco de</li>
              <li>[M] Mudança de Horário</li>
              <li>[S] Suspensão</li>
            </Options>
            <Kinds>
              <KindsLabel>Tipos de Justificativas</KindsLabel>
              <Swatch $c="#0f0" /><KindName $c="#0f0">Abona Horas</KindName>
              <Swatch $c="#fff" /><KindName $c="#fff">Explicação</KindName>
            </Kinds>
            <Hint>Tecle [Esc] par a Abortar a Operação</Hint>
          </Dialog>
        </Sheet>

        <Side>
          <Tabs role="tablist">
            <Tab $on role="tab" aria-selected="true">Eventos do Ponto</Tab>
            <Tab role="tab" aria-selected="false">Eventos da Folha</Tab>
          </Tabs>
          <Summary>
            <SummaryTitle>Resumo</SummaryTitle>
            <SummaryBody>
              <SummaryGrid>
                <SumTable>
                  <colgroup><col width={53} /><col width={23} /><col width={182} /><col width={34} /><col /></colgroup>
                  <thead><tr>{['Sigla', 'Cód', 'Histórico', 'Total', 'Int'].map(h => <SumTh key={h}>{h}</SumTh>)}</tr></thead>
                  <tbody>
                    {summary.map(r => (
                      <tr key={r[0]}>{r.map((v, i) => <SumTd key={i} $right={i === 1 || i === 3}>{v}</SumTd>)}</tr>
                    ))}
                  </tbody>
                </SumTable>
              </SummaryGrid>
              <VScroll>
                <ArrowButton aria-label="Rolar para cima"><Arrow dir="up" /></ArrowButton>
                <VThumb><Ico w={8} h={8}><L d="M1 .5h6M1 3.500h6M1 6.500h6" c="#606060" /></Ico></VThumb>
                <ArrowButton aria-label="Rolar para baixo"><Arrow dir="down" /></ArrowButton>
              </VScroll>
            </SummaryBody>
            <HScroll>
              <ArrowButton aria-label="Rolar para a esquerda"><Arrow dir="left" /></ArrowButton>
              <HThumb />
              <ArrowButton aria-label="Rolar para a direita"><Arrow dir="right" /></ArrowButton>
            </HScroll>
          </Summary>
          <Weekly>
            <WeeklyTable>
              <colgroup><col width={47} /></colgroup>
              <tbody>
                <tr><th>Jornada</th><th>1ª</th><th>2ª</th><th>3ª</th><th>4ª</th><th>5ª</th></tr>
                <tr><th>Semanal</th><td>00:00</td><td>08:00</td><td>30:49</td><td>00:00</td><td>00:00</td></tr>
              </tbody>
            </WeeklyTable>
          </Weekly>
        </Side>
      </Main>

      <Totals>
        <TotalsTitle>Totais</TotalsTitle>
        <label htmlFor="normais">Normais</label>
        <TotalBox id="normais" readOnly />
        <label htmlFor="extras">Extras</label>
        <TotalBox id="extras" readOnly value="07:35" />
      </Totals>
      <StatusBar>
        <StatusLabel $w={22}>Usr</StatusLabel>
        <StatusBox $w={148} $left>MASTER</StatusBox>
        <StatusLabel $w={20}>Lic</StatusLabel>
        <StatusBox $w={358}>SISTEMA NAO REGISTRADO - MODULO DE SUPORTE</StatusBox>
        <StatusLabel $w={50}>Sistema</StatusLabel>
        <StatusBox $w={148}>Flex Time</StatusBox>
        <StatusLabel $w={15}>V.</StatusLabel>
        <StatusBox $w={78}>6.73.00</StatusBox>
        <StatusBox $w={248}>Folha de Pagamento: &nbsp;- NENHUMA</StatusBox>
        <StatusBox />
      </StatusBar>
    </Window>
  );
}
